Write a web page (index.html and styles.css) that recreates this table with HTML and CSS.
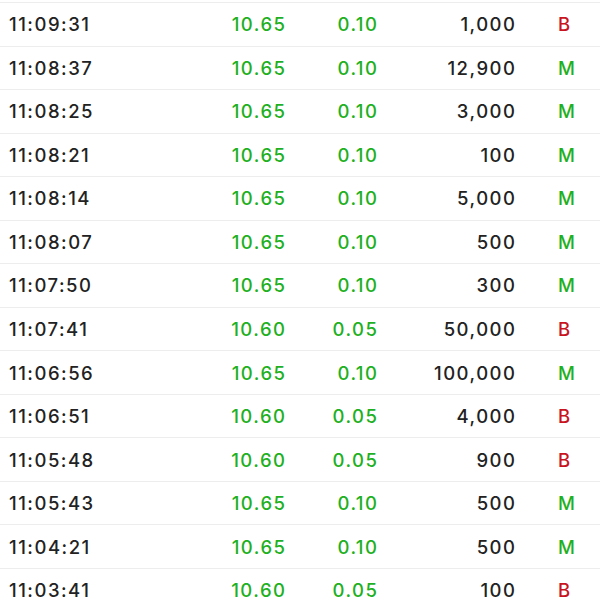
FILE: index.html
```html
<!DOCTYPE html>
<html>
<head>
<meta charset="utf-8">
<link rel="stylesheet" href="styles.css">
</head>
<body>
<div class="list">
  <div class="row"><span class="time">11:09:31</span><span class="num up">10.65</span><span class="num up">0.10</span><span class="num vol">1,000</span><span class="side buy">B</span></div>
  <div class="row"><span class="time">11:08:37</span><span class="num up">10.65</span><span class="num up">0.10</span><span class="num vol">12,900</span><span class="side mid">M</span></div>
  <div class="row"><span class="time">11:08:25</span><span class="num up">10.65</span><span class="num up">0.10</span><span class="num vol">3,000</span><span class="side mid">M</span></div>
  <div class="row"><span class="time">11:08:21</span><span class="num up">10.65</span><span class="num up">0.10</span><span class="num vol">100</span><span class="side mid">M</span></div>
  <div class="row"><span class="time">11:08:14</span><span class="num up">10.65</span><span class="num up">0.10</span><span class="num vol">5,000</span><span class="side mid">M</span></div>
  <div class="row"><span class="time">11:08:07</span><span class="num up">10.65</span><span class="num up">0.10</span><span class="num vol">500</span><span class="side mid">M</span></div>
  <div class="row"><span class="time">11:07:50</span><span class="num up">10.65</span><span class="num up">0.10</span><span class="num vol">300</span><span class="side mid">M</span></div>
  <div class="row"><span class="time">11:07:41</span><span class="num up">10.60</span><span class="num up">0.05</span><span class="num vol">50,000</span><span class="side buy">B</span></div>
  <div class="row"><span class="time">11:06:56</span><span class="num up">10.65</span><span class="num up">0.10</span><span class="num vol">100,000</span><span class="side mid">M</span></div>
  <div class="row"><span class="time">11:06:51</span><span class="num up">10.60</span><span class="num up">0.05</span><span class="num vol">4,000</span><span class="side buy">B</span></div>
  <div class="row"><span class="time">11:05:48</span><span class="num up">10.60</span><span class="num up">0.05</span><span class="num vol">900</span><span class="side buy">B</span></div>
  <div class="row"><span class="time">11:05:43</span><span class="num up">10.65</span><span class="num up">0.10</span><span class="num vol">500</span><span class="side mid">M</span></div>
  <div class="row"><span class="time">11:04:21</span><span class="num up">10.65</span><span class="num up">0.10</span><span class="num vol">500</span><span class="side mid">M</span></div>
  <div class="row"><span class="time">11:03:41</span><span class="num up">10.60</span><span class="num up">0.05</span><span class="num vol">100</span><span class="side buy">B</span></div>
</div>
</body>
</html>
```
FILE: styles.css
```css
html, body {
  margin: 0;
  padding: 0;
  background: #ffffff;
}
body {
  font-family: Inter, "Liberation Sans", sans-serif;
  font-size: 18.5px;
  font-weight: 500;
  letter-spacing: 1.5px;
  color: #222222;
  overflow: hidden;
}
.list {
  padding-top: 2px;
}
.row {
  display: grid;
  grid-template-columns: 196px 80px 92px 138px 1fr;
  align-items: center;
  height: 43.54px;
  box-sizing: border-box;
  border-top: 1px solid #ededed;
  padding-left: 9px;
}
.num {
  text-align: right;
  margin-right: -1.5px;
}
.up {
  color: #1eb01e;
}
.vol {
  color: #222222;
}
.side {
  padding-left: 43px;
  letter-spacing: 0;
}
.buy {
  color: #c8141e;
}
.mid {
  color: #1eb01e;
}
```
